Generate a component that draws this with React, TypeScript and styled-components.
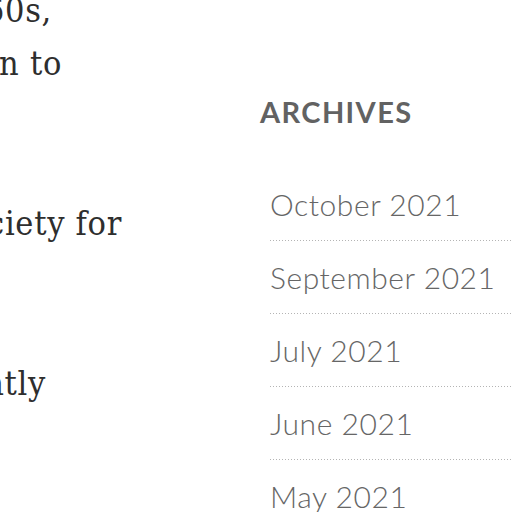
import React from "react";
import styled, { createGlobalStyle } from "styled-components";

const Global = createGlobalStyle`
  html, body { margin: 0; padding: 0; background: #ffffff; }
  body { overflow: hidden; }
`;

const Page = styled.div`
  display: flex;
  width: 512px;
  height: 512px;
  overflow: hidden;
  background: #fff;
`;

const Article = styled.div`
  flex: 0 0 260px;
  display: flex;
  flex-direction: column;
  margin-top: -16px;
  font-family: "DejaVu Serif Condensed", "DejaVu Serif", "Liberation Serif", serif;
  font-size: 34px;
  letter-spacing: 0.7px;
  line-height: 53.3px;
  color: #2e2e2e;
`;

const Line = styled.div<{ $end: number }>`
  display: flex;
  justify-content: flex-end;
  width: ${(p) => p.$end}px;
  height: 53.3px;
  white-space: nowrap;
`;

const Sidebar = styled.aside`
  flex: 1;
  padding-top: 95px;
  font-family: "Lato", "Inter", sans-serif;
`;

const WidgetTitle = styled.h2`
  margin: 0 0 39px;
  font-size: 29px;
  font-weight: 700;
  letter-spacing: 1.4px;
  line-height: 34px;
  text-transform: uppercase;
  color: #626262;
`;

const List = styled.ul`
  list-style: none;
  margin: 0;
  padding: 0 0 0 10px;
`;

const Item = styled.li`
  padding: 16px 0 17px;
  line-height: 40px;
  font-size: 30px;
  font-weight: 300;
  letter-spacing: 0.55px;
  color: #666666;
  background: repeating-linear-gradient(to right, #b4b4b4 0 1px, transparent 1px 3px) left bottom / 100% 1px no-repeat;
  white-space: nowrap;
`;

const lines: { text: string; end: number }[] = [
  { text: "in the late 1960s,", end: 52 },
  { text: "drew attention to", end: 62 },
  { text: "", end: 0 },
  { text: "", end: 0 },
  { text: "the Audio Engineering Society for", end: 122 },
  { text: "", end: 0 },
  { text: "", end: 0 },
  { text: "most recently", end: 46 },
];

const archives = ["October 2021", "September 2021", "July 2021", "June 2021", "May 2021"];

export default function App() {
  return (
    <>
      <Global />
      <Page>
        <Article>
          {lines.map((l, i) => (
            <Line key={i} $end={l.end}>
              {l.text}
            </Line>
          ))}
        </Article>
        <Sidebar>
          <WidgetTitle>Archives</WidgetTitle>
          <List>
            {archives.map((a) => (
              <Item key={a}>{a}</Item>
            ))}
          </List>
        </Sidebar>
      </Page>
    </>
  );
}
